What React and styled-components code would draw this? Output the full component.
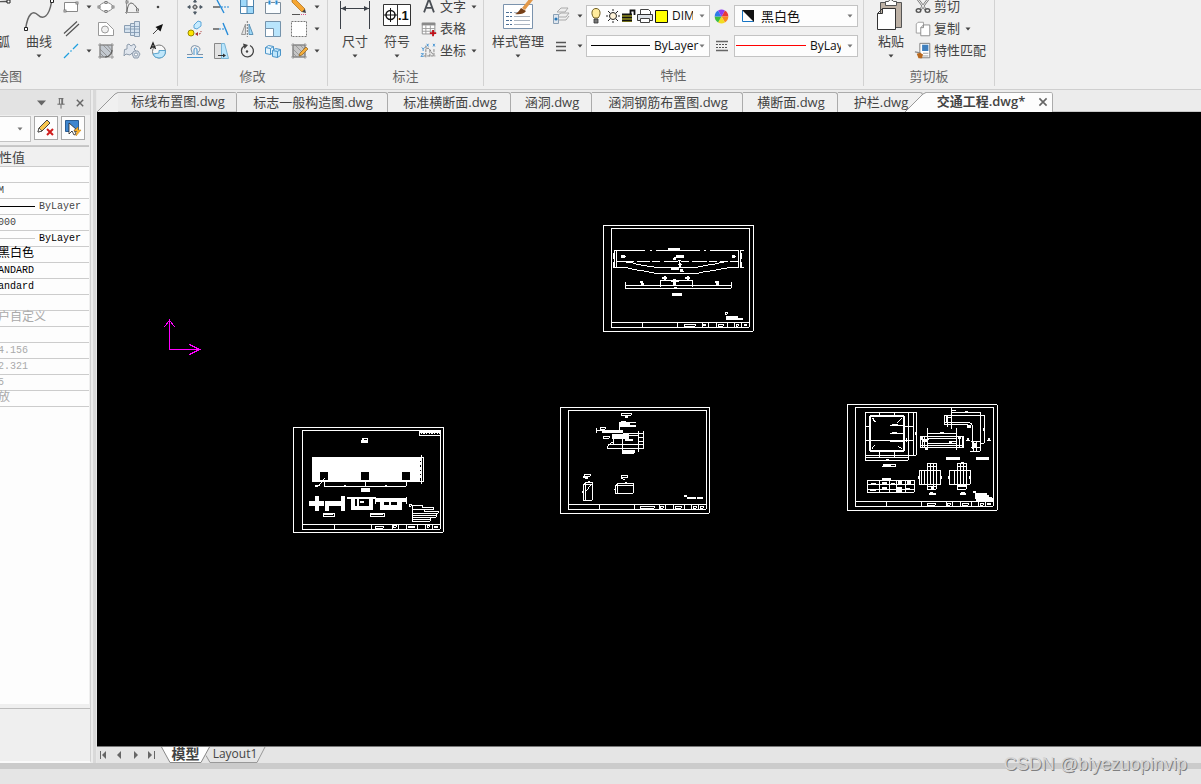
import React, { useState } from 'react';
import styled, { createGlobalStyle, css } from 'styled-components';

const GlobalStyle = createGlobalStyle`
  * {
    box-sizing: border-box;
  }

  body {
    margin: 0;
    overflow: hidden;
    background: #e5e5e5;
    color: #444;
    font: 13px/18px "Open Sans", "Noto Sans CJK SC", sans-serif;
  }

  button, select {
    margin: 0;
    padding: 0;
    border: 0;
    background: none;
    color: inherit;
    font: inherit;
  }

  svg {
    display: block;
    flex: none;
  }
`;

const Page = styled.div`
  display: flex;
  flex-direction: column;
  height: 100vh;
  overflow: hidden;
`;

/* ---------- ribbon ---------- */

const Ribbon = styled.header`
  display: flex;
  flex: none;
  align-items: flex-end;
  height: 90px;
  padding-bottom: 3px;
  overflow: hidden;
  background: #f0f0f0;
  border-bottom: 1px solid #cfcfcf;
`;

const Group = styled.section`
  display: flex;
  flex: none;
  flex-direction: column;
  width: ${props => props.$width}px;
  height: 90px;
  border-right: 1px solid #d2d2d2;

  &:first-child {
    margin-left: -159px;
  }
`;

const GroupBody = styled.div`
  display: flex;
  justify-content: ${props => props.$end ? 'flex-end' : 'flex-start'};
  height: 66px;
  padding: 0 ${props => props.$end ? 6 : 0}px 0 ${props => props.$pad || 0}px;
`;

const GroupTitle = styled.h2`
  margin: 0;
  color: #666;
  font-size: 13px;
  font-weight: 400;
  line-height: 28px;
  text-align: center;
`;

const BigButton = styled.button`
  display: flex;
  flex: none;
  flex-direction: column;
  align-items: center;
  width: ${props => props.$width}px;
  white-space: nowrap;

  > svg:last-child {
    margin-top: 4px;
  }
`;

const IconGrid = styled.div`
  display: grid;
  grid-template-columns: ${props => props.$columns};
  grid-template-rows: repeat(3, 22px);
`;

const IconButton = styled.button`
  display: flex;
  align-items: center;
  justify-content: center;
`;

const List = styled.div`
  display: flex;
  flex-direction: column;
  padding-left: 2px;
`;

const ListButton = styled.button`
  display: flex;
  align-items: center;
  gap: 2px;
  height: 22px;
  line-height: 16px;
  white-space: nowrap;

  > span {
    padding-bottom: 2px;
  }

  > svg:nth-of-type(2) {
    margin-left: 3px;
  }
`;

const PropertyGrid = styled.div`
  display: grid;
  grid-template-columns: 26px 12px 124px 24px 124px;
  grid-template-rows: 30px 30px;
  align-items: center;
  justify-items: center;
  padding-top: 5px;
`;

const Combo = styled.label`
  display: flex;
  align-items: center;
  width: 100%;
  height: 22px;
  padding: 0 4px 0 ${props => props.$tight ? 1 : 4}px;
  overflow: hidden;
  background: #fdfdfd;
  border: 1px solid #c3c3c3;
  color: #111;
`;

const ComboSelect = styled.select`
  flex: 1;
  min-width: 0;
  height: 18px;
  margin: 0 ${props => props.$wide ? 0 : 6}px 0 4px;
  overflow: hidden;
  appearance: none;
  font-size: ${props => props.$latin ? 12 : 13}px;
  text-overflow: clip;
`;

/* ---------- workspace ---------- */

const Workspace = styled.main`
  display: flex;
  flex: 1;
  min-height: 0;
`;

const Panel = styled.aside`
  display: flex;
  flex: none;
  flex-direction: column;
  width: 91px;
  overflow: hidden;
  background: #efefef;
  border-right: 1px solid #d2d2d2;
  border-bottom: 2px solid #fafafa;
`;

const PanelHeader = styled.div`
  display: flex;
  flex: none;
  align-items: center;
  justify-content: flex-end;
  gap: 3px;
  height: 25px;
  padding-right: 2px;
  background: #e3e3e3;
`;

const PanelTools = styled.div`
  display: flex;
  flex: none;
  justify-content: flex-end;
  gap: 3px;
  height: 30px;
  padding: 1px 5px 0 0;
`;

const ObjectCombo = styled.label`
  display: flex;
  flex: none;
  align-items: center;
  justify-content: flex-end;
  width: 46px;
  height: 26px;
  padding-right: 7px;
  background: #fdfdfd;
  border: 1px solid #c3c3c3;
`;

const ObjectSelect = styled.select`
  width: 12px;
  appearance: none;
`;

const ToolButton = styled.button`
  display: flex;
  flex: none;
  align-items: center;
  justify-content: center;
  width: 24px;
  height: 24px;
  background: #fdfdfd;
  border: 1px solid #a8a8a8;
`;

const TableWrap = styled.div`
  flex: 1;
  margin: 0 1px 0 -18px;
  background: #fdfdfd;
  border-top: 1px solid #c9c9c9;
`;

const Table = styled.table`
  width: 100%;
  border-collapse: collapse;
  table-layout: fixed;
`;

const Head = styled.th`
  height: 20px;
  padding: 0 4px;
  background: #f0f0f0;
  border-top: 1px solid #c4c4c4;
  border-bottom: 1px solid #ccc;
  font-weight: 400;
  line-height: 18px;
  text-align: left;
`;

const Cell = styled.td`
  height: 16px;
  padding: 0 4px;
  border-bottom: 1px solid #ccc;
  color: ${props => props.$tone};
  font-family: "Liberation Mono", "Noto Sans CJK SC", monospace;
  font-size: ${props => props.$cjk ? 12 : 10}px;
  line-height: 15px;
  white-space: nowrap;
`;

const CellContent = styled.span`
  display: flex;
  align-items: center;
  justify-content: ${props => props.$line ? 'flex-end' : 'flex-start'};
  gap: 4px;
  height: 15px;
  padding-right: ${props => props.$line ? 4 : 0}px;
  padding-left: ${props => props.$indent ? 12 : 0}px;
`;

const LineSample = styled.i`
  flex: 1;
  height: 1px;
  background: ${props => props.$color};
`;

const PanelFoot = styled.div`
  flex: none;
  height: 57px;
  padding-top: 4px;

  &::before {
    display: block;
    height: 1px;
    background: #bdbdbd;
    content: "";
  }
`;

const Splitter = styled.div`
  flex: none;
  width: 6px;
  background: #d9d9d9;
  border-left: 2px solid #ececec;
  border-right: 1px solid #e8e8e8;
`;

const DocumentArea = styled.div`
  display: flex;
  flex: 1;
  flex-direction: column;
  min-width: 0;
`;

const TabStrip = styled.nav`
  display: flex;
  flex: none;
  align-items: flex-end;
  height: 22px;
  background: #ececec;
  border-bottom: 1px solid #c8c8c8;
`;

const Tab = styled.button`
  display: flex;
  flex: none;
  align-items: center;
  justify-content: center;
  width: ${props => props.$width}px;
  height: 20px;
  margin-bottom: -1px;
  background: #f0f0f0;
  border: 1px solid #ababab;
  border-width: 1px 1px 0 0;
  border-radius: 0 3px 0 0;
  white-space: nowrap;

  ${props => props.$slanted && css`
    background: linear-gradient(#ababab, #ababab) 21px 0 / 100% 1px no-repeat;
    border-top: 0;
    justify-content: flex-start;
  `}

  ${props => props.$active && css`
    z-index: 1;
    margin-left: -18px;
    background:
      linear-gradient(#ababab, #ababab) 21px 0 / 100% 1px no-repeat,
      linear-gradient(#fdfdfd, #fdfdfd) 21px 0 / 100% 100% no-repeat;
    font-weight: 600;
  `}
`;

const TabName = styled.span`
  flex: 1;
  padding: 0 0 2px 2px;
  line-height: 16px;
  text-align: center;
`;

const Canvas = styled.div`
  flex: 1;
  min-height: 0;
  overflow: hidden;
  background: #000;
`;

const LayoutBar = styled.nav`
  display: flex;
  flex: none;
  height: 17px;
  background: #e5e5e5;
  border-top: 1px solid #777;
`;

const NavButton = styled.button`
  display: flex;
  align-items: center;
  justify-content: center;
  width: 16px;
  color: #666;

  &:first-child {
    margin-left: -2px;
  }
`;

const LayoutTab = styled.button`
  display: grid;
  align-items: start;
  justify-items: center;
  margin-left: ${props => props.$active ? 2 : -6}px;
  font-size: ${props => props.$active ? 14 : 12}px;
  font-weight: ${props => props.$active ? 700 : 400};
  line-height: 14px;

  > * {
    grid-area: 1 / 1;
  }
`;

const StatusBar = styled.footer`
  flex: none;
  height: 21px;
  background: #e5e5e5;
  border-top: 6px solid #cbcbcb;
`;

const Watermark = styled.span`
  position: absolute;
  right: 14px;
  bottom: 10px;
  color: #d6d6d6;
  font: 18px/20px "Liberation Sans", Arial, sans-serif;
  text-shadow: 1px 1px 0 #808080;
  white-space: nowrap;
`;

/* ---------- icons ---------- */

const Caret = ({ color = '#444' }) => (
  <svg width="6" height="4" viewBox="0 0 6 4"><path d="M.5 .5h5L3 3.500z" fill={color} /></svg>
);

const Node = ({ x, y }) => (
  <rect x={x - 1} y={y - 1} width="2" height="2" fill="#fff" stroke="#666" strokeWidth=".8" />
);

const icons = {
  rectangle: <><path d="M3.500 5.500h13v9h-13z" fill="#fff" stroke="#888" /><Node x={16} y={6} /><Node x={4} y={14} /></>,
  ellipse: <><ellipse cx="10" cy="10" rx="6.500" ry="4.500" fill="#fff" stroke="#888" /><Node x={10} y={5.5} /><Node x={10} y={14.5} /><Node x={3} y={10} /><Node x={17} y={10} /></>,
  spline: <><path d="M4.500 1v16M3 15.500h14" stroke="#999" /><path d="M5 15C6 3 11 4 16 13" stroke="#555" /><Node x={5} y={5} /><Node x={15.5} y={13} /></>,
  point: <circle cx="10" cy="10" r="1.300" fill="#444" />,
  doubleLine: <path d="M3 14.500 16 2.500M5 17 18 5" stroke="#555" strokeWidth="1.200" />,
  region: <><path d="M2.500 3.500h8l7 7v6h-15z" fill="#fff" stroke="#999" /><circle cx="9" cy="10.500" r="3.500" fill="#f0f0f0" stroke="#999" /></>,
  bolt: <><path d="M2.500 6.500h6v7h-6zM8.500 4.500h4v12h-4zM12.500 2.500h5v15h-5z" fill="#d6e3ef" stroke="#8b9eb2" /><path d="M2 10h16M9 7.500h8M9 13.500h8" stroke="#7a94b0" strokeWidth=".8" /></>,
  leader: <><path d="m5 15 5-5" stroke="#444" /><path d="m15 5-2.500 7.500-5-4.500z" fill="#111" /></>,
  ray: <path d="m3 17 5-5m1.500-1.500 1-1M12 8l5-5" stroke="#1fa0e0" strokeWidth="1.300" />,
  hatch: <><path d="M4 4h12v7l-5 5H4z" fill="#c3c9d0" stroke="#888" /><path d="m4 8 8 8M4 12l4 4M7 4l8 8M11 4l5 6M2 4h16M4 2v16M16 2v16M2 16h16" stroke="#888" strokeWidth=".8" /><path d="M16 9q0 7-7 7" stroke="#555" /></>,
  gears: <><path d="M2.500 8.500 5 8V4l2-1 2 2 3-2 2 3-2 2 2 2-1 3-3-1-2 2-4-1-2 2z" fill="#dfe5ed" stroke="#8e9cac" /><path d="m10 13 2-3h4l2 3-2 4h-4z" fill="#d4dce6" stroke="#8e9cac" /><circle cx="14" cy="13.500" r="1.600" fill="#fff" stroke="#8e9cac" /></>,
  partial: <><circle cx="11" cy="10.500" r="6.500" fill="#f8f8f8" stroke="#777" /><path d="M11 9.500h6.500q0 7.500-6.500 7.500-5 0-6-4l6-1z" fill="#bfe6fa" stroke="#5aa5cf" /><path d="m2.500 8 2.500-6L7.500 8M3.500 6h3" stroke="#222" strokeWidth="1.300" /></>,
  move: <><path d="M8.500 8.500h3v3h-3z" fill="#bbb" stroke="#666" /><path d="m10 2 2.200 3.200H7.800zM10 18l2.200-3.200H7.800zM2 10l3.200-2.200v4.400zM18 10l-3.200-2.200v4.400z" fill="#4f5b66" /><path d="M10 5v3m0 4v3m-5-5h3m4 0h3" stroke="#4f5b66" strokeDasharray="1 1" /></>,
  trim: <><path d="M2 10h7" stroke="#444" strokeWidth="1.300" /><path d="M10 10h8" stroke="#268bd8" strokeDasharray="2 1" /><path d="m6 3 7 13" stroke="#268bd8" strokeWidth="1.400" /></>,
  array: <><path d="M3.500 2.500h13v14h-13z" fill="#fff" /><path d="M3.500 2.500h6.500v7H3.500zM10 9.500h6.500v7H10z" fill="#9fd9fa" /><path d="M3.500 2.500h13v14h-13zM10 2.500v14M3.500 9.500h13" stroke="#4d84ad" /></>,
  breakAt: <><path d="M5.500 5.500h-3v11h15v-11h-3M8 5.500h4" fill="#fafdff" stroke="#7d8c9a" /><path d="M6.500 3.500v4m7-4v4" stroke="#258bd6" strokeWidth="2" /></>,
  erase: <><path d="m3 3 3-1 10 10-3 3L3 5z" fill="#f5a633" stroke="#a86b15" strokeWidth=".7" /><path d="m13 15 3-3 1 4z" fill="#444" /><path d="M3 17.500h8" stroke="#555" /><path d="M12 17.500h6" stroke="#d58" strokeDasharray="1 1" /></>,
  copy: <><circle cx="6" cy="14" r="3" fill="#ffe600" stroke="#9a8b00" /><path d="m9 6 4-4 3 1v4l-4 3-3-1z" fill="#c5ebff" stroke="#5ca6d8" /><path d="M11 15h3q2 0 2-3" stroke="#a33" strokeDasharray="2 1" /><path d="M13 13v4l-3-2z" fill="#a33" /></>,
  extend: <><path d="M2 10h6" stroke="#444" strokeWidth="1.300" /><path d="M8 10h6" stroke="#268bd8" strokeDasharray="2 1" /><path d="m12 4 5 12" stroke="#268bd8" strokeWidth="1.400" /></>,
  mirror: <><path d="M8.500 5v10.500h-4z" fill="#e2e2e2" stroke="#999" /><path d="M12 5v10.500h4z" fill="#9dd7f7" stroke="#5c94b8" /><path d="M10.300 2v16" stroke="#777" strokeDasharray="2 1" /></>,
  scale: <><path d="M2.500 2.500h15v15h-15z" fill="#b9e5fc" stroke="#7593ab" /><path d="M2.500 9.500h8v8h-8z" fill="#fff" stroke="#7593ab" /></>,
  stretchBox: <><path d="M2.500 2.500h15v15h-15z" fill="#fff" /><path d="M2.500 2.500h15v15h-15z" stroke="#777" strokeDasharray="2 1" /></>,
  offset: <><path d="M2 13.500h5q1 0 0-2-2-4 0-6t6 0 0 6q-1 2 0 2h5" stroke="#7e93a8" /><path d="M2 16.500h16M9 14V9q0-2 1.500-2T12 9v5" stroke="#4796d2" /></>,
  stretch: <><path d="M3.500 2.500h7v15h-7z" fill="#e2e2e2" stroke="#888" /><path d="M10.500 2.500h3l4 15h-7z" fill="#b9e5fc" stroke="#79b5d6" /><path d="M7 14.500h6" stroke="#333" /><path d="m12 12.500 3 2-3 2z" fill="#333" /></>,
  rotate: <><path d="M7 5a6 6 0 1 0 6-.500" stroke="#444" strokeWidth="1.300" /><path d="M6 2.500 11 4 7.500 8z" fill="#444" /><circle cx="10" cy="10.500" r="1.200" fill="#444" /></>,
  solidCopy: <><path d="m2.500 6.500 3-2 5 1v6l-3 2-5-1zM2.500 6.500l5 1v6m0-6 3-2" fill="#e4f4fd" stroke="#4b95c9" /><path d="m9.500 9.500 3-2 5 1v6l-3 2-5-1zM9.500 9.500l5 1v6m0-6 3-2" fill="#bfe6fb" stroke="#4b95c9" /></>,
  hatchEdit: <><path d="M4 4h12v12H4z" fill="#c6c6c6" stroke="#777" /><path d="m4 8 8 8M4 12l4 4M6 4l10 10M11 4l5 5M2 4h16M4 2v16M16 2v16M2 16h16" stroke="#888" strokeWidth=".7" /><path d="m17 6 2 2-6 6-3 1 1-3z" fill="#f6ae3a" stroke="#8a6120" strokeWidth=".7" /></>,
  text: <path d="m4.500 16 5.500-15 5.500 15M6.500 11h7" stroke="#4a4f55" strokeWidth="2" />,
  table: <><path d="M2.500 3.500h14v12h-14z" fill="#fff" stroke="#8a8a8a" /><path d="M2 3h15v3H2z" fill="#8a8a8a" /><path d="M2.500 9.500h14M2.500 12.500h14M6.500 6v9.500M11.500 6v9.500" stroke="#9a9a9a" /><path d="M14.500 11v7m-3.500-3.500h7" stroke="#c00f17" strokeWidth="2" /></>,
  coords: <><path d="M6.500 4v13M4 15.500h13M7 7h3l5 8M15.500 8v8M11 9v8" stroke="#777" strokeDasharray="3 1" /><path d="m2 6 1.500 2L5 6M3.500 8v2m4-8 2 3m0-3-2 3m7-3 2 3m0-3-2 3M1 13h3l-3 3h3" stroke="#2b86cf" strokeWidth=".9" /></>,
  layerState: <><path d="m6 6 4-4h7l-3 4zM7 9l3-2h8l-3 4H8M8 14h7l3-4" fill="#eee" stroke="#aaa" /><path d="M2.500 8.500h5v9h-5z" fill="#dfe6ee" stroke="#8aa0b5" /><circle cx="5" cy="13" r="1.600" fill="#2878b8" /></>,
  lineWeight: <path d="M5 6.500h10M5 10.500h10M5 14.500h10" stroke="#555" strokeWidth="1.400" />,
  lineType: <><path d="M4 5.500h12M4 14.500h12" stroke="#666" strokeWidth="1.300" /><path d="M4 8.500h12M4 11.500h12" stroke="#555" strokeDasharray="2 1" /></>,
  colorWheel: <g transform="translate(9.500 10.500)">
    {['#e83a3a', '#f98a1f', '#f2dd22', '#3fbf3f', '#2f7bea', '#8e3ff0'].map((fill, i) => (
      <path key={fill} d="M0 0 0-6.800A6.800 6.800 0 0 1 5.900-3.400z" fill={fill} transform={`rotate(${i * 60 + 30})`} />
    ))}
  </g>,
  cut: <><path d="m4 1 9 12M16 1 7 13" stroke="#777" strokeWidth="2.600" /><path d="m4 1 9 12M16 1 7 13" stroke="#f4f4f4" strokeWidth="1.100" /><ellipse cx="5" cy="14" rx="2.500" ry="2" stroke="#555" strokeWidth="1.600" /><ellipse cx="15" cy="14" rx="2.500" ry="2" stroke="#555" strokeWidth="1.600" /></>,
  copyClip: <><path d="M2.500 4.500 4.500 2.500h6v12h-8z" fill="#fff" stroke="#999" /><path d="m7.500 8.500 3-3h7v12h-10zM7.500 8.500h3v-3" fill="#fff" stroke="#888" /></>,
  match: <><path d="M6.500 1.500h11v16h-11z" fill="#fff" stroke="#777" /><path d="M9 3h7v7H9z" fill="#3f7fbd" /><path d="M10 12.500h6M10 15.500h6" stroke="#999" /><path d="m1 11 6 1" stroke="#888" strokeWidth="1.500" /><path d="m3 13 4-1 3 2-1 4H5z" fill="#b8681d" /></>,
  pin: <path d="M7 4.500h6M8 4.500v7m4-7v7m-1-7v7M5.500 11.500h9M10 12v5" stroke="#666" strokeWidth="1.200" />,
  close: <path d="m6 6 8 8m0-8-8 8" stroke="#666" strokeWidth="1.800" />,
  deselect: <><path d="m2 14 1-4 8-8 3 3-8 8z" fill="#f9c64d" stroke="#333" strokeWidth=".9" /><path d="m2 14 1-4 3 3z" fill="#fff" stroke="#333" strokeWidth=".7" /><path d="m11 11 6 6m0-6-6 6" stroke="#d01c1c" strokeWidth="2" /></>,
  quickSelect: <><path d="M2.500 2.500h13v11h-13z" fill="#3f86cf" stroke="#2a5d94" /><path d="M6 5v11l3-3 2 4 2-1-2-4h3z" fill="#fff" stroke="#222" strokeWidth=".8" /><path d="m15 9-4 4h3l-1 5 5-6h-3z" fill="#ffb52e" stroke="#c77b00" strokeWidth=".5" /></>,
};

const Icon = ({ name, size = 20 }) => (
  <svg width={size} height={size} viewBox="0 0 20 20" fill="none" aria-hidden="true">{icons[name]}</svg>
);

const bigIcons = {
  arc: <><path d="M-6 15Q2 5 27.500 5.500" stroke="#555" strokeWidth="1.400" /><path d="M26 4h3v3h-3z" fill="#fff" stroke="#222" /></>,
  curve: <><path d="M2.500 33C5 17 10 14 15 19S26 21 28.500 6" stroke="#666" strokeWidth="1.500" /><path d="M1.500 31.500h3v3h-3zM27.500 3.500h3v3h-3z" fill="#fff" stroke="#222" /></>,
  dimension: <><path d="M1.500 5v28M30.500 5v28M2 12.500h28" stroke="#3c4148" /><path d="m2 12.500 5-2.500v5zM30 12.500 25 10v5z" fill="#3c4148" /></>,
  symbol: <><path d="M2.500 8.500h27v21h-27zM16.500 8.500v21" fill="#fff" stroke="#333" /><circle cx="9.500" cy="19" r="4.500" stroke="#111" strokeWidth="1.500" /><path d="M9.500 12v14M3 19h13" stroke="#111" /><text x="17" y="24" fontSize="13" fontWeight="700" fill="#111" fontFamily="Liberation Sans">.1</text></>,
  styles: <><path d="M1.500 8.500h29v24h-29z" fill="#fff" stroke="#7b93ad" /><path d="M4 16.500h6m-6 4h6m-6 4h6m-6 4h6" stroke="#4c6f95" strokeDasharray="3 1" /><path d="M12 16.500h4m-4 4h16m-16 4h16m-16 4h16" stroke="#aab4c0" /><path d="m20 12 8-10 3 2-8 10z" fill="#e29849" /><path d="m19 12 5 3q-3 4-11 3 3-1 6-6z" fill="#774018" /></>,
  paste: <><path d="M5.500 6.500h21v25h-21z" fill="#bdb1a5" stroke="#555" /><path d="M10.500 9.500v-4h3q2-4 5 0h3v4z" fill="#fff" stroke="#555" /><path d="m2.500 17.500 5-5h13v21h-18zM2.500 17.500h5v-5" fill="#fff" stroke="#333" /></>,
};

const BigIcon = ({ name }) => (
  <svg width="32" height="36" viewBox="0 0 32 36" fill="none" aria-hidden="true">{bigIcons[name]}</svg>
);

const LayerIcons = () => (
  <svg width="77" height="20" viewBox="0 0 77 20" fill="none" aria-hidden="true">
    <path d="M3 12C0 9 0 2.500 5 2.500s5 6.500 2 9.500z" fill="#ffeb9c" stroke="#6d5a1c" />
    <path d="M3 13h4v4H3z" fill="#777" stroke="#333" strokeWidth=".8" />
    <circle cx="22" cy="10" r="3.500" fill="#fff3d8" stroke="#222" />
    <path d="M22 3v2m0 10v2m-7-7h2m10 0h2m-12-5 2 2m6 6 2 2m0-10-2 2m-6 6-2 2" stroke="#222" />
    <path d="M31 8h10v8H31z" fill="#d5cf22" />
    <path d="M31 8.500h10m-10 3h10m-10 3h10M39.500 8V4.500h4V9" stroke="#111" strokeWidth="1.800" />
    <path d="M49.500 8V3.500h8l2 2V8" fill="#fff" stroke="#444" />
    <path d="M46.500 8.500h15v6h-15z" fill="#dfe3e8" stroke="#333" />
    <path d="M49.500 12.500h9v4h-9z" fill="#fff" stroke="#444" />
    <path d="M64.500 4.500h12v12h-12z" fill="#ff0" stroke="#111" />
  </svg>
);

/* ---------- drawing sheets, three drawing units per screen pixel ---------- */

const Sheet = ({ x, y, children }) => (
  <g transform={`translate(${x} ${y}) scale(.333333)`}>{children}</g>
);

const Line = ({ d, dash }) => <path d={d} strokeDasharray={dash} />;
const Solid = ({ d }) => <path d={d} fill="#fff" stroke="none" />;

const PlanSheet = () => (
  <Sheet x={493} y={103}>
    <Line d="M40.500 31.500h450v318h-450zM64.500 40.500h414v297h-414zM64 322.500h414M157.500 322v15M262.500 322v15M337.500 322v15M355.500 322v15M379.500 322v15M412.500 322v15M433.500 322v15M454.500 322v15" />
    <Line d="M283.500 328.500h33v6h-33zM385.500 328.500h15v6h-15zM439.500 328.500h6v6h-6z" />
    <Solid d="M339 327h9v6h-9zM462 327h9v6h-9zM234 99h36v6h-36zM93 120h12v9H93zM426 120h9v9h-9zM258 120h24v9h-24zM105 123h3v3h-3zM435 123h3v3h-3zM243 159h24v6h-24zM270 162h9v9h-9zM246 234h30v9h-30z" />
    <Line d="M73 106.500h92M180 106.500h6M198 106.500h132M342 106.500h6M360 106.500h87M73.500 105v53M79.500 105v53M445.500 105v53M452.500 108v50M450 106.500h12M450 157.500h12M70.500 114v18M70.500 141v15M455.500 114v18M455.500 141v15" />
    <Line d="M79 139.500h53M141 139.500h39M186 139.500h24M222 139.500h33M273 139.500h24M306 139.500h45M357 139.500h24M390 139.500h24M420 139.500h26" />
    <Line d="M70 157.500h39l21 6 24 3 30 6 20 3.500h113l28-6 30-4 22-5 21-3h28M109 141.500l18 2 21 6 21 3 33 5h115l28-6 27-4 38-8" />
    <Line d="M252 135v-6h6M270 135v18M264 136h9M240 141h24M264 150h12" />
    <Solid d="M252 129h6v6h-6zM267 144h6v12h-6zM273 168h9v3h-9z" />
    <Line d="M106.500 201v19h318v-19M106 211.500h318M211.500 217v-21h96v21" />
    <Solid d="M150 198h9v6h-9zM153 204h9v6h-9zM375 198h12v6h-12zM378 204h9v6h-9zM216 187h15v5h-15zM285 187h15v5h-15zM222 184h6v12h-6zM291 184h6v12h-6zM243 196h24v5h-24zM249 192h9v18h-9zM252 216h9v5h-9z" />
    <Line d="M406.500 292.500h6v6h-6z" />
    <Solid d="M408 303h36v6h15v6h-51z" />
  </Sheet>
);

const MarkingSheet = () => (
  <Sheet x={186} y={306}>
    <Line d="M31.500 28.500h450v315h-450zM58.500 37.500h414v297h-414zM58 319.500h414M154.500 319v15M265.500 319v15M328.500 319v15M346.500 319v15M370.500 319v15M403.500 319v15M427.500 319v15M448.500 319v15" />
    <Line d="M277.500 325.500h24v6h-24zM331.500 322.500h9v6h-9zM433.500 322.500h6v6h-6zM409.500 40.500h62v12h-62zM412 43.500h60" />
    <Line d="M413 47.500h57" dash="4 4" />
    <Line d="M237.500 61.500h16v12h-16z" />
    <Solid d="M234 66h21v9h-21zM375 324h21v6h-21zM453 324h12v6h-12zM237 60h6v12h-6z" />
    <path d="M87 117h324v75H87zM111 162v24h24v-24zM234 162v24h24v-24zM357 162v24h24v-24z" fill="#fff" fillRule="evenodd" stroke="none" />
    <Line d="M415.500 111v87M421.500 117v75M411 118.500h12M411 190.500h12" />
    <Line d="M412.500 120v66" dash="9 4" />
    <Line d="M124.500 190v15h246v-15M247.500 190v15M97 204h10l18-23" />
    <Solid d="M96 201h9v6h-9zM183 201h6v6h-6zM306 201h6v6h-6zM234 210h27v12h-27z" />
    <Solid d="M78 249h18v-15h12v15h15v15h-15v15H96v-15H78zM126 249h48v-15h12v45h-12v-15h-36v15h-12z" />
    <path d="M192 237h87v6h-9v33h-66v-33h-12zM216 243v21h6v-21zM228 243v21h30v-21z" fill="#fff" fillRule="evenodd" stroke="none" />
    <path d="M276 240h95v12h-14v24h-66v-24h-15zM303 252v9h15v-9zM324 252v9h18v-9z" fill="#fff" fillRule="evenodd" stroke="none" />
    <Solid d="M231 249h12v6h-12z" />
    <Line d="M370.500 237v21M277.500 240v18M120.500 286.500h35v9h-35zM261.500 286.500h44v9h-44zM124 289h27M265 289h36" />
    <Line d="M379.500 259.500h6v6h-6zM388.500 262.500h30v6h34v6h-64zM388.500 274.500h36v6h42v6h-78zM388.500 286.500h72v12h-72zM388 292.500h72M388.500 298.500h54v12h-54zM388 304.500h54" />
  </Sheet>
);

const SectionSheet = () => (
  <Sheet x={453} y={286}>
    <Line d="M31.500 28.500h447v318h-447zM55.500 37.500h414v297h-414zM55 319.500h414M148.500 319v15M253.500 319v15M328.500 319v15M346.500 319v15M370.500 319v15M403.500 319v15M424.500 319v15M445.500 319v15" />
    <Line d="M271.500 325.500h42v6h-42zM331.500 325.500h9v6h-9zM376.500 325.500h18v6h-18zM430.500 325.500h9v6h-9zM451.500 325.500h9v6h-9zM213.500 46.500h30v6h-30z" />
    <Solid d="M225 54h9v6h-9zM207 72h6v-3h15v3h30v3h-18v6h18v6h-51zM156 96h54v9h-54zM192 96h27v8h-27zM186 108h51v15h-51zM225 122h24v7h-24zM219 156h36v9h-36z" />
    <Line d="M208.500 87v15M139.500 90v14M140 97h20M151.500 88.500h15v6h-15zM219 106.500h46M219 112h46M265.500 99v63M280.500 99v53M265 106.500h15M265 118h15M265 130h15M265 139.500h15M265 151.500h15" />
    <Line d="M160.500 115.500h18v6h-18zM190.500 123v16h75M190 130l-18 15v6h94M217.500 123v43h36v-9h-36M175 139h20" />
    <Line d="M103.500 229.500h18v6h-18zM214.500 232.500h18v7h-18zM100.500 259.500l6-6h21v54h-27zM106 253v54M100 259h27M106 280l20-21M196.500 262.500l6-6h48v30h-54zM202.500 256v30M196 262.500h54" />
    <Solid d="M99 234h6v6h-6zM105 238h9v5h-9zM213 240h6v3h-6zM219 242h6v4h-6zM114 249h6v5h-6zM225 252h6v5h-6zM96 279h5v6h-5zM193 273h5v3h-5zM402 291h9v6h-9zM411 297h27v6h-27zM441 297h18v6h-18z" />
  </Sheet>
);

const DetailSheet = () => (
  <Sheet x={741} y={284}>
    <Line d="M28.500 25.500h450v318h-450zM52.500 34.500h414v297h-414zM52 316.500h414M145.500 316v15M250.500 316v15M325.500 316v15M343.500 316v15M367.500 316v15M400.500 316v15M421.500 316v15M442.500 316v15" />
    <Line d="M268.500 322.500h24v6h-24zM328.500 322.500h9v6h-9zM373.500 322.500h18v6h-18zM427.500 322.500h9v6h-9z" />
    <Line d="M82.500 49.500h153v129h-153zM226.500 49v129M211.500 49v144h-129v-15M82 184.500h129M82 91.500h12M200 91.500h26M82 133.500h144M125.500 49v12M169.500 49v12M125.500 167v17M169.500 167v17" />
    <path d="M101 59h92l6 6v95l-6 6h-92l-6-6V65z" strokeWidth="6" />
    <Line d="M102 66l10 13M105 66l8 12M191 66l-14 16M101 159l11-13M191 159l-10-9M156 88.500h39M156 112.500h42M156 136.500h42M205.500 127v12" />
    <Solid d="M163 84h18v6h-18zM163 108h15v5h-15zM163 134h15v5h-15zM225 66h4v9h-4zM232 108h4v9h-4zM144 188h9v5h-9zM225 105h4v9h-4z" />
    <Line d="M133 211.500h40M136.500 205.500h21v4h-21zM160 205h12v6M88.500 253.500h141v36h-141zM88 265.500h141M88 280h141M124.500 253v36M154.500 253v36M175.500 253v36M202.500 253v36" />
    <Solid d="M132 246h27v6h-27zM99 261h15v6H99zM97 279h17v6H97zM132 259h15v6h-15zM132 273h15v6h-15zM159 261h12v6h-12zM177 273h15v15h-15zM205 277h12v4h-12zM181 256h12v9h-12zM206 256h12v9h-12z" />
    <Line d="M247.500 120.500h130v33h-130zM268.500 95v67M355.500 95v67M247 149h130M270 127.500h84M270 141.500h84M268 111.500h87M253.500 121v33M259.500 121v33M365.500 120v33M372.500 120v33M250 132h24M334 138h22" />
    <Solid d="M306 108h12v4h-12zM246 123h8v6h-8zM255 132h15v6h-15zM360 123h8v6h-8zM334 135h9v6h-9zM262 156h6v6h-6z" />
    <Line d="M319.500 58.500h20v27h-20zM340.500 36v62M327.500 58v35M324 66h15M319 79.500h69q15 0 15 12v67M340 85.500h48q8 0 8 12M340 49.500h87v117h-27M340 58.500h99v84h-14M340 43h15M400.500 138h26v28M407.500 138v28M414.500 138v28M400 154h26M397 166.500h30" />
    <Solid d="M381 45h9v5h-9zM435 96h5v9h-5zM387 87h12v9h-12zM384 131h12v4h-12zM388 126h4v8h-4zM447 131h12v4h-12zM451 126h4v8h-4zM324 183h42v9h-42zM414 183h39v9h-39zM324 61h6v18h-6zM405 141h12v12h-12z" />
    <Line d="M244.500 223.500h64v42h-64zM268.500 202.500h27v78h-27zM277.500 202v63M286.500 202v78M259.500 223v42M250.500 223v42M268 211.500h27M268 271h27M334.500 223.500h63v42h-63zM358.500 202.500h27v78h-27zM367.500 202v63M376.500 202v63M349.500 223v42M358 211.500h27" />
    <Solid d="M370 198h9v5h-9zM241 240h6v9h-6zM306 240h5v9h-5zM331 240h5v9h-5zM394 240h6v9h-6zM276 288h9v4h-9zM273 292h21v5h-21zM369 288h12v4h-12zM366 292h18v5h-18zM358 265h27v9h-27zM279 269h9v9h-9zM405 285h9v6h-9zM412 291h35v6h5v6h9v6h-49zM415 306h51v9h-51zM447 321h12v6h-12z" />
  </Sheet>
);

const Model = () => (
  <svg width="100%" height="100%" fill="none" stroke="#fff" strokeWidth="3" shapeRendering="crispEdges" role="img" aria-label="交通工程">
    <path d="M72.500 208v29.500h30M67.500 215l5-7 5 7M92.500 232.500l10 5-10 5" stroke="#f0f" strokeWidth="1" />
    <PlanSheet />
    <MarkingSheet />
    <SectionSheet />
    <DetailSheet />
  </svg>
);

/* ---------- content ---------- */

const drawTools = [
  ['rectangle', '矩形'], 'more', ['ellipse', '椭圆'], ['spline', '样条'], ['point', '点'],
  ['doubleLine', '双线'], null, ['region', '区域覆盖'], ['bolt', '图块'], ['leader', '引线'],
  ['ray', '射线'], 'more', ['hatch', '填充'], ['gears', '零件'], ['partial', '局部'],
];

const modifyTools = [
  ['move', '移动'], ['trim', '修剪'], ['array', '阵列'], ['breakAt', '打断'], ['erase', '删除'], 'more',
  ['copy', '复制'], ['extend', '延伸'], ['mirror', '镜像'], ['scale', '缩放'], ['stretchBox', '选择'], 'more',
  ['offset', '偏移'], ['stretch', '拉伸'], ['rotate', '旋转'], ['solidCopy', '三维'], ['hatchEdit', '编辑填充'], 'more',
];

const documents = [
  { name: '标线布置图.dwg', width: 140, slanted: true },
  { name: '标志一般构造图.dwg', width: 151 },
  { name: '标准横断面.dwg', width: 123 },
  { name: '涵洞.dwg', width: 81 },
  { name: '涵洞钢筋布置图.dwg', width: 151 },
  { name: '横断面.dwg', width: 95 },
  { name: '护栏.dwg', width: 85 },
  { name: '交通工程.dwg*', width: 148, slanted: true, active: true },
];

const properties = [
  { value: '' },
  { value: 'DIM' },
  { value: 'ByLayer', line: '#000' },
  { value: '1.000' },
  { value: 'ByLayer', line: '#ccc', tone: '#000' },
  { value: '黑白色', cjk: true, indent: true, tone: '#000' },
  { value: 'STANDARD', tone: '#000' },
  { value: 'Standard', tone: '#000' },
  { value: '' },
  { value: '用户自定义', cjk: true, tone: '#aaa' },
  { value: '' },
  { value: '104.156', tone: '#aaa' },
  { value: '102.321', tone: '#aaa' },
  { value: '205', tone: '#aaa' },
  { value: '缩放', cjk: true, tone: '#aaa' },
];

const Tools = ({ items, columns }) => (
  <IconGrid $columns={columns}>
    {items.map((item, i) => {
      if (!item) return <span key={i} />;
      if (item === 'more') return <IconButton key={i} aria-label="更多"><Caret /></IconButton>;

      return <IconButton key={i} aria-label={item[1]}><Icon name={item[0]} /></IconButton>;
    })}
  </IconGrid>
);

const Big = ({ icon, label, width }) => (
  <BigButton $width={width}>
    <BigIcon name={icon} />
    <span>{label}</span>
    <Caret />
  </BigButton>
);

const Small = ({ icon, label, more }) => (
  <ListButton>
    <Icon name={icon} size={18} />
    <span>{label}</span>
    {more && <Caret />}
  </ListButton>
);

const RibbonGroup = ({ title, width, pad, end, children }) => (
  <Group $width={width}>
    <GroupBody $pad={pad} $end={end}>{children}</GroupBody>
    <GroupTitle>{title}</GroupTitle>
  </Group>
);

const PropertyPanel = () => (
  <Panel>
    <PanelHeader>
      <button aria-label="菜单">
        <svg width="14" height="6"><path d="M1 .5h9L5.500 5.500z" fill="#666" /></svg>
      </button>
      <button aria-label="固定"><Icon name="pin" size={16} /></button>
      <button aria-label="关闭"><Icon name="close" size={16} /></button>
    </PanelHeader>

    <PanelTools>
      <ObjectCombo>
        <ObjectSelect aria-label="对象" />
        <Caret color="#777" />
      </ObjectCombo>
      <ToolButton aria-label="取消选择"><Icon name="deselect" /></ToolButton>
      <ToolButton aria-label="快速选择"><Icon name="quickSelect" /></ToolButton>
    </PanelTools>

    <TableWrap>
      <Table>
        <thead>
          <tr><Head scope="col">属性值</Head></tr>
        </thead>
        <tbody>
          {properties.map(({ value, line, cjk, indent, tone = '#444' }, i) => (
            <tr key={i}>
              <Cell $tone={tone} $cjk={cjk}>
                <CellContent $line={line} $indent={indent}>
                  {line && <LineSample $color={line} />}
                  {value}
                </CellContent>
              </Cell>
            </tr>
          ))}
        </tbody>
      </Table>
    </TableWrap>
    <PanelFoot />
  </Panel>
);

const App = () => {
  const [current, setCurrent] = useState('交通工程.dwg*');

  return (
    <Page>
      <GlobalStyle />

      <Ribbon>
        <RibbonGroup title="绘图" width={337} end>
          <Big icon="arc" label="圆弧" width={46} />
          <Big icon="curve" label="曲线" width={38} />
          <Tools items={drawTools} columns="26px 9px 26px 26px 26px" />
        </RibbonGroup>

        <RibbonGroup title="修改" width={150} pad={4}>
          <Tools items={modifyTools} columns="repeat(5, 26px) 10px" />
        </RibbonGroup>

        <RibbonGroup title="标注" width={156} pad={6}>
          <Big icon="dimension" label="尺寸" width={42} />
          <Big icon="symbol" label="符号" width={42} />
          <List>
            <Small icon="text" label="文字" more />
            <Small icon="table" label="表格" />
            <Small icon="coords" label="坐标" more />
          </List>
        </RibbonGroup>

        <RibbonGroup title="特性" width={380} pad={4}>
          <Big icon="styles" label="样式管理" width={60} />
          <PropertyGrid>
            <IconButton aria-label="图层状态"><Icon name="layerState" /></IconButton>
            <IconButton aria-label="更多"><Caret /></IconButton>
            <Combo>
              <LayerIcons />
              <ComboSelect aria-label="图层" $latin><option>DIM</option></ComboSelect>
              <Caret color="#777" />
            </Combo>
            <IconButton aria-label="颜色"><Icon name="colorWheel" /></IconButton>
            <Combo>
              <svg width="18" height="14" viewBox="0 0 18 14">
                <path d="M3.500 1.500h11v11h-11z" fill="#fff" stroke="#1674c4" />
                <path d="M3 1h12v12z" fill="#111" />
              </svg>
              <ComboSelect aria-label="对象颜色"><option>黑白色</option></ComboSelect>
              <Caret color="#777" />
            </Combo>

            <IconButton aria-label="线宽"><Icon name="lineWeight" /></IconButton>
            <IconButton aria-label="更多"><Caret /></IconButton>
            <Combo>
              <svg width="59" height="2"><path d="M0 0h59v1H0z" fill="#000" /></svg>
              <ComboSelect aria-label="对象线宽" $latin $wide><option>ByLayer</option></ComboSelect>
              <Caret color="#777" />
            </Combo>
            <IconButton aria-label="线型"><Icon name="lineType" /></IconButton>
            <Combo $tight>
              <svg width="70" height="2"><path d="M0 0h70v1H0z" fill="#f00" /></svg>
              <ComboSelect aria-label="对象线型" $latin><option>ByLayer</option></ComboSelect>
              <Caret color="#777" />
            </Combo>
          </PropertyGrid>
        </RibbonGroup>

        <RibbonGroup title="剪切板" width={131} pad={6}>
          <Big icon="paste" label="粘贴" width={42} />
          <List>
            <Small icon="cut" label="剪切" />
            <Small icon="copyClip" label="复制" more />
            <Small icon="match" label="特性匹配" />
          </List>
        </RibbonGroup>
      </Ribbon>

      <Workspace>
        <PropertyPanel />
        <Splitter />

        <DocumentArea>
          <TabStrip>
            {documents.map(({ name, width, slanted, active }) => (
              <Tab
                key={name}
                $width={width}
                $slanted={slanted}
                $active={active}
                aria-current={name === current}
                onClick={() => setCurrent(name)}
              >
                {slanted &&
                  <svg width="21" height="20" viewBox="0 0 21 20">
                    <path d="M0 20 19 1.500 21 .5V20" fill={active ? '#fdfdfd' : '#f0f0f0'} stroke="none" />
                    <path d="M0 20 18 2 21 .5" fill="none" stroke="#999" />
                  </svg>
                }
                <TabName>{name}</TabName>
                {active && <Icon name="close" size={18} />}
              </Tab>
            ))}
          </TabStrip>

          <Canvas><Model /></Canvas>

          <LayoutBar>
            <NavButton aria-label="第一个"><svg width="8" height="8"><path d="M1 0h1v8H1zM7 0v8L3 4z" fill="currentColor" /></svg></NavButton>
            <NavButton aria-label="上一个"><svg width="8" height="8"><path d="M6 0v8L2 4z" fill="currentColor" /></svg></NavButton>
            <NavButton aria-label="下一个"><svg width="8" height="8"><path d="M3 0v8l4-4z" fill="currentColor" /></svg></NavButton>
            <NavButton aria-label="最后一个"><svg width="8" height="8"><path d="M7 0h1v8H7zM1 0v8l4-4z" fill="currentColor" /></svg></NavButton>
            <LayoutTab $active>
              <svg width="49" height="16"><path d="M.5 0 9 15.500h31L48.500 0" fill="#fff" stroke="#888" /></svg>
              <span>模型</span>
            </LayoutTab>
            <LayoutTab>
              <svg width="62" height="16"><path d="M2 8.500 6 15.500h47L61 0" fill="none" stroke="#999" /></svg>
              <span>Layout1</span>
            </LayoutTab>
          </LayoutBar>
        </DocumentArea>
      </Workspace>

      <StatusBar />
      <Watermark>CSDN @biyezuopinvip</Watermark>
    </Page>
  );
};

export default App;
